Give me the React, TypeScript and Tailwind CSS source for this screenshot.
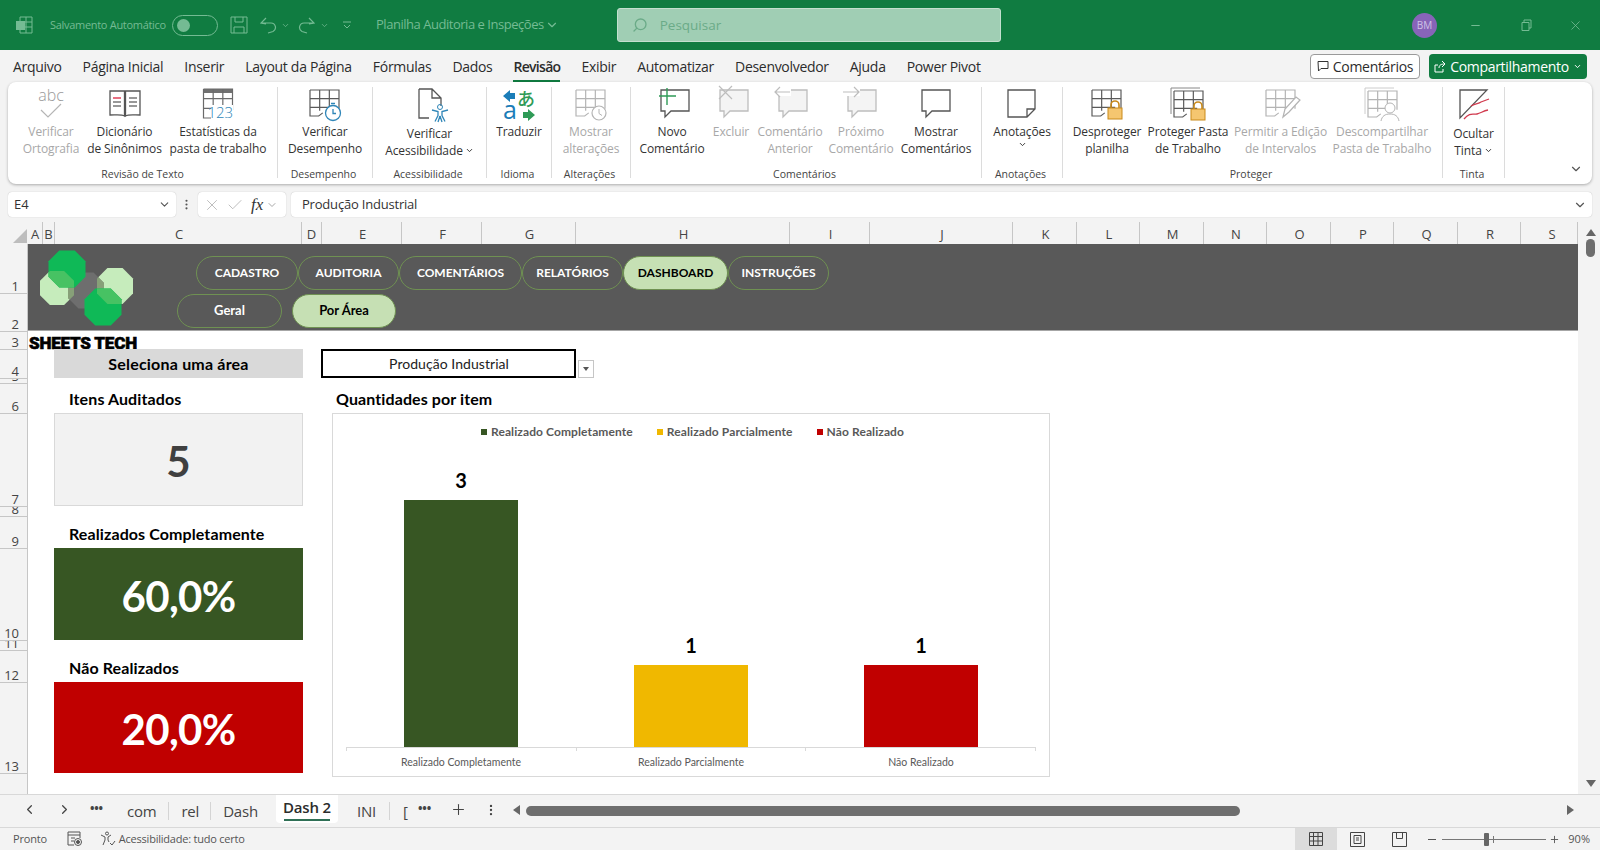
import type { ReactNode } from "react";
import { Check, ChevronDown, ChevronLeft, ChevronRight, Minus, MoreVertical, Plus, Search, X } from "lucide-react";

const ui = "font-['Open_Sans',sans-serif]";
const calibri = "font-['Lato',sans-serif]";

// table glyph used by several ribbon buttons
function TableIcon({ x = 5, y = 5, w = 29, h = 26, c = "#5a5a5a", fill = "none" }: { x?: number; y?: number; w?: number; h?: number; c?: string; fill?: string }) {
  const cw = w / 3;
  const ch = h / 3;
  return (
    <g stroke={c} strokeWidth="1.2" fill={fill}>
      <path d={`M${x} ${y}h${w}v${h * 0.72}M${x} ${y}v${h}h${w * 0.3}l${w * 0.14} -${h * 0.12}`} />
      <path d={`M${x} ${y + ch}h${w}M${x} ${y + ch * 2}h${w * 0.8}M${x + cw} ${y}v${h * 0.8}M${x + cw * 2} ${y}v${h * 0.8}`} />
    </g>
  );
}

function Bubble({ c = "#555", fill = "#fff", x = 8, y = 5 }: { c?: string; fill?: string; x?: number; y?: number }) {
  return <path d={`M${x} ${y}h28v21H${x + 10}l-6 6v-6h-4z`} fill={fill} stroke={c} strokeWidth="1.3" />;
}

function Lock({ x, y }: { x: number; y: number }) {
  return (
    <g>
      <path d={`M${x + 3} ${y + 8}v-3a4 4 0 0 1 8 0v3`} fill="none" stroke="#c98a1a" strokeWidth="1.6" />
      <rect x={x} y={y + 8} width="14" height="11" fill="#f5c670" stroke="#c98a1a" />
    </g>
  );
}

function Svg({ children }: { children: ReactNode }) {
  return <svg width="40" height="40" viewBox="0 0 40 40">{children}</svg>;
}

const icons: Record<string, ReactNode> = {
  spell: (
    <Svg>
      <text x="20" y="16" textAnchor="middle" fontSize="16" fontFamily="Open Sans" fontWeight="300" fill="#9a9a9a">abc</text>
      <path d="M10 25l7 7L30 19" fill="none" stroke="#b5b5b5" strokeWidth="1.2" />
    </Svg>
  ),
  book: (
    <Svg>
      <path d="M19.5 31c-3-2-9-1-14.500-1V6h14.500zM20.500 31c3-2 9-1 14.500-1V6H20.500z" fill="#fff" stroke="#555" strokeWidth="1.3" />
      <path d="M8 13h8" stroke="#e0405a" strokeWidth="1.500" />
      <path d="M8 17h8M8 21h8M24 13h8M24 17h8M24 21h8" stroke="#777" strokeWidth="1.300" />
    </Svg>
  ),
  stats: (
    <Svg>
      <rect x="5.500" y="4" width="29" height="4" fill="#707070" />
      <TableIcon x={5.500} y={4} w={29} h={29} c="#6a6a6a" />
      <rect x="13" y="20" width="22" height="14" fill="#fff" />
      <text x="35" y="33" textAnchor="end" fontSize="15" fontFamily="Open Sans" fontWeight="300" fill="#2f86b8">123</text>
    </Svg>
  ),
  perf: (
    <Svg>
      <TableIcon />
      <circle cx="28" cy="28" r="7.500" fill="#fff" stroke="#2f86b8" strokeWidth="1.300" />
      <path d="M28 24v4.500h3M26 18.500h4" fill="none" stroke="#2f86b8" strokeWidth="1.300" />
    </Svg>
  ),
  access: (
    <Svg>
      <path d="M9 4h13l9 9v8M22 4v9h9M19 33H9V4" fill="none" stroke="#555" strokeWidth="1.300" />
      <circle cx="30" cy="22" r="2.500" fill="none" stroke="#2f86b8" />
      <path d="M22 25l6 1.500v4l-3 6M38 25l-6 1.500v4l3 6M30 31l-2 6M30 31l2 6" fill="none" stroke="#2f86b8" strokeWidth="1.300" />
    </Svg>
  ),
  translate: (
    <Svg>
      <path d="M4 11l7-6v3h5v6h-5v3z" fill="#1b7db8" />
      <text x="27" y="21" textAnchor="middle" fontSize="18" fontWeight="500" fontFamily="Noto Sans CJK JP" fill="#2f9b57">あ</text>
      <text x="11" y="34" textAnchor="middle" fontSize="25" fontFamily="Open Sans" fill="#1b7db8">a</text>
      <path d="M36 30l-7 6v-3h-5v-6h5v-3z" fill="#2f9b57" />
    </Svg>
  ),
  changes: (
    <Svg>
      <TableIcon c="#b4b4b4" />
      <circle cx="28" cy="28" r="7" fill="#fff" stroke="#b4b4b4" strokeWidth="1.200" />
      <path d="M28 24v4.500l3 2" fill="none" stroke="#b4b4b4" />
    </Svg>
  ),
  newc: (
    <Svg>
      <Bubble x={9} />
      <path d="M15 3v17M7 11h17" stroke="#2f9b57" strokeWidth="1.400" />
    </Svg>
  ),
  del: (
    <Svg>
      <Bubble x={9} c="#bdbdbd" fill="#f4f4f4" />
      <path d="M8 1l13 13M21 1L8 14" stroke="#bdbdbd" strokeWidth="1.200" />
    </Svg>
  ),
  prev: (
    <Svg>
      <Bubble x={9} c="#bdbdbd" fill="#f4f4f4" />
      <rect x="3" y="3" width="18" height="8" fill="#fff" />
      <path d="M20 7H5m5-5L5 7l5 5" fill="none" stroke="#bdbdbd" strokeWidth="1.200" />
    </Svg>
  ),
  next: (
    <Svg>
      <Bubble x={7} c="#bdbdbd" fill="#f4f4f4" />
      <rect x="1" y="3" width="18" height="8" fill="#fff" />
      <path d="M2 7h16m-5-5l5 5-5 5" fill="none" stroke="#bdbdbd" strokeWidth="1.200" />
    </Svg>
  ),
  show: (
    <Svg>
      <Bubble x={6} />
    </Svg>
  ),
  note: (
    <Svg>
      <path d="M6 5h27v19l-8 8H6zM33 24h-8v8" fill="#fff" stroke="#555" strokeWidth="1.300" />
    </Svg>
  ),
  unprotect: (
    <Svg>
      <TableIcon />
      <Lock x={21} y={15} />
    </Svg>
  ),
  protect: (
    <Svg>
      <path d="M3 29V3h29" fill="none" stroke="#888" />
      <TableIcon x={6} y={6} h={26} />
      <Lock x={23} y={16} />
    </Svg>
  ),
  ranges: (
    <Svg>
      <TableIcon c="#b4b4b4" />
      <path d="M22 32l2-8 11-12 4 3-11 12z" fill="#fff" stroke="#b4b4b4" strokeWidth="1.200" />
    </Svg>
  ),
  unshare: (
    <Svg>
      <path d="M3 29V3h29" fill="none" stroke="#ccc" />
      <TableIcon x={6} y={6} c="#b4b4b4" />
      <circle cx="28" cy="23" r="5" fill="#fff" stroke="#b4b4b4" />
      <path d="M19 36c1-5 4-7 9-7s8 2 9 7" fill="#fff" stroke="#b4b4b4" />
    </Svg>
  ),
  ink: (
    <Svg>
      <path d="M6 5h27L6 33z" fill="none" stroke="#555" strokeWidth="1.300" />
      <path d="M10 34c6-7 9-4 13-5s6-3 11-4M17 21c5-3 7-2 10-4l8-3" fill="none" stroke="#d13a4e" strokeWidth="1.300" />
    </Svg>
  ),
};

type Btn = { w: number; icon: string; a: string; b?: string; off?: boolean; down?: boolean; low?: boolean };

function RibbonButton({ w, icon, a, b, off, down, low }: Btn) {
  return (
    <div style={{ width: w }} className={`flex flex-col items-center pt-1 text-[12px] leading-[17px] tracking-[-0.1px] whitespace-nowrap ${off ? "text-[#a8a8a8]" : "text-[#333]"}`}>
      <div className="flex h-[37px] w-10 items-center justify-center">{icons[icon]}</div>
      <div className={low ? "mt-[2px]" : ""}>{a}</div>
      <div className="flex items-center justify-center gap-[2px]">
        {b}
        {down && <ChevronDown size={9} strokeWidth={2.5} />}
      </div>
    </div>
  );
}

const groups: { label: string; w: number; pl?: number; buttons: Btn[] }[] = [
  {
    label: "Revisão de Texto",
    w: 269,
    pl: 8,
    buttons: [
      { w: 70, icon: "spell", a: "Verificar", b: "Ortografia", off: true },
      { w: 77, icon: "book", a: "Dicionário", b: "de Sinônimos" },
      { w: 110, icon: "stats", a: "Estatísticas da", b: "pasta de trabalho" },
    ],
  },
  { label: "Desempenho", w: 94, buttons: [{ w: 94, icon: "perf", a: "Verificar", b: "Desempenho" }] },
  { label: "Acessibilidade", w: 113, buttons: [{ w: 113, icon: "access", a: "Verificar", b: "Acessibilidade", down: true, low: true }] },
  { label: "Idioma", w: 64, buttons: [{ w: 64, icon: "translate", a: "Traduzir" }] },
  { label: "Alterações", w: 78, buttons: [{ w: 78, icon: "changes", a: "Mostrar", b: "alterações", off: true }] },
  {
    label: "Comentários",
    w: 350,
    pl: 10,
    buttons: [
      { w: 62, icon: "newc", a: "Novo", b: "Comentário" },
      { w: 56, icon: "del", a: "Excluir", off: true },
      { w: 62, icon: "prev", a: "Comentário", b: "Anterior", off: true },
      { w: 80, icon: "next", a: "Próximo", b: "Comentário", off: true },
      { w: 70, icon: "show", a: "Mostrar", b: "Comentários" },
    ],
  },
  { label: "Anotações", w: 80, buttons: [{ w: 80, icon: "note", a: "Anotações", down: true }] },
  {
    label: "Proteger",
    w: 379,
    buttons: [
      { w: 88, icon: "unprotect", a: "Desproteger", b: "planilha" },
      { w: 74, icon: "protect", a: "Proteger Pasta", b: "de Trabalho" },
      { w: 111, icon: "ranges", a: "Permitir a Edição", b: "de Intervalos", off: true },
      { w: 92, icon: "unshare", a: "Descompartilhar", b: "Pasta de Trabalho", off: true },
    ],
  },
  { label: "Tinta", w: 61, buttons: [{ w: 61, icon: "ink", a: "Ocultar", b: "Tinta", down: true, low: true }] },
];

const menus = ["Arquivo", "Página Inicial", "Inserir", "Layout da Página", "Fórmulas", "Dados", "Revisão", "Exibir", "Automatizar", "Desenvolvedor", "Ajuda", "Power Pivot"];

const columns: [string, number][] = [
  ["A", 15], ["B", 12], ["C", 247], ["D", 20], ["E", 80], ["F", 80], ["G", 94], ["H", 214], ["I", 80], ["J", 143],
  ["K", 64], ["L", 63], ["M", 64], ["N", 63], ["O", 64], ["P", 63], ["Q", 64], ["R", 63], ["S", 57],
];

const rowHeads: [string, number][] = [
  ["1", 50], ["2", 38], ["3", 18], ["4", 29], ["5", 5], ["6", 30], ["7", 93], ["8", 10], ["9", 32], ["10", 92], ["11", 10], ["12", 32], ["13", 91], ["", 20],
];

const nav = [
  { t: "CADASTRO", w: 102 },
  { t: "AUDITORIA", w: 101 },
  { t: "COMENTÁRIOS", w: 123 },
  { t: "RELATÓRIOS", w: 101 },
  { t: "DASHBOARD", w: 105, on: true },
  { t: "INSTRUÇÕES", w: 101 },
];

function Pill({ t, w, on, small }: { t: string; w: number; on?: boolean; small?: boolean }) {
  return (
    <div style={{ width: w }} className={`flex h-[34px] items-center justify-center rounded-[17px] border border-[#6f9152] font-bold ${small ? "text-[12px]" : "text-[13px]"} ${on ? "bg-[#c6e0b4] text-black" : "text-white"}`}>
      {t}
    </div>
  );
}

function Octagon({ cx, cy, r, fill }: { cx: number; cy: number; r: number; fill: string }) {
  return <polygon points={octa(cx, cy, r)} fill={fill} />;
}

function octa(cx: number, cy: number, r: number) {
  const k = r * 0.42;
  return [[-k, -r], [k, -r], [r, -k], [r, k], [k, r], [-k, r], [-r, k], [-r, -k]].map(([a, b]) => `${cx + a},${cy + b}`).join(" ");
}

function Logo() {
  return (
    <svg width="110" height="87" viewBox="0 0 110 87" className="absolute left-0 top-0">
      <defs>
        <clipPath id="ll"><polygon points={octa(29, 44, 17)} /></clipPath>
        <clipPath id="lr"><polygon points={octa(87, 42, 18)} /></clipPath>
      </defs>
      <Octagon cx={29} cy={44} r={17} fill="#c6ecbc" />
      <Octagon cx={87} cy={42} r={18} fill="#c6ecbc" />
      <Octagon cx={58} cy={46.500} r={18} fill="#6e6e6e" />
      <g clipPath="url(#ll)"><Octagon cx={58} cy={46.500} r={18} fill="#87a078" /></g>
      <g clipPath="url(#lr)"><Octagon cx={58} cy={46.500} r={18} fill="#87a078" /></g>
      <Octagon cx={39} cy={25} r={18.500} fill="#0fb957" />
      <Octagon cx={75} cy={63} r={18.500} fill="#0fb957" />
      <g clipPath="url(#ll)"><Octagon cx={39} cy={25} r={18.500} fill="#47c263" /></g>
      <g clipPath="url(#lr)"><Octagon cx={75} cy={63} r={18.500} fill="#47c263" /></g>
    </svg>
  );
}

function Kpi({ label, value, cls, h, labelH }: { label: string; value: string; cls: string; h: number; labelH: number }) {
  return (
    <>
      <div style={{ height: labelH }} className="flex items-end pb-1 pl-[15px] text-[16px] font-bold leading-5 tracking-[0.1px] text-black">{label}</div>
      <div style={{ height: h }} className={`flex items-center justify-center pt-1 ${cls}`}>{value}</div>
    </>
  );
}

const bars = [
  { v: "3", h: 247, c: "bg-[#375623]", t: "Realizado Completamente" },
  { v: "1", h: 82, c: "bg-[#f0b800]", t: "Realizado Parcialmente" },
  { v: "1", h: 82, c: "bg-[#c00000]", t: "Não Realizado" },
];

const legend = [
  { c: "bg-[#375623]", t: "Realizado Completamente", ml: "ml-0" },
  { c: "bg-[#f0b800]", t: "Realizado Parcialmente", ml: "ml-[24px]" },
  { c: "bg-[#c00000]", t: "Não Realizado", ml: "ml-[24px]" },
];

function Chart() {
  return (
    <div className="ml-[11px] flex h-[364px] w-[718px] flex-col border border-[#d9d9d9] px-[13px]">
      <div className="flex h-[38px] items-center pb-[2px] pl-[135px] text-[12px] font-bold tracking-[0.1px] text-[#595959]">
        {legend.map((l) => (
          <div key={l.t} className={`flex items-center gap-[4px] ${l.ml}`}>
            <span className={`h-[6px] w-[6px] ${l.c}`} />
            {l.t}
          </div>
        ))}
      </div>
      <div className="flex h-[295px] items-end">
        {bars.map((b) => (
          <div key={b.t} className="flex flex-1 flex-col items-center">
            <div className="mb-[8px] text-[20px] font-bold leading-6 text-black">{b.v}</div>
            <div style={{ height: b.h }} className={`w-[114px] ${b.c}`} />
          </div>
        ))}
      </div>
      <div className="flex h-[4px] border-x border-t border-[#d9d9d9]">
        <div className="flex-1 border-r border-[#d9d9d9]" />
        <div className="flex-1 border-r border-[#d9d9d9]" />
        <div className="flex-1" />
      </div>
      <div className="flex pt-[3px] text-[10.500px] leading-[16px] text-[#595959]">
        {bars.map((b) => (
          <div key={b.t} className="flex-1 text-center">{b.t}</div>
        ))}
      </div>
    </div>
  );
}

function TitleBar() {
  const c = "#74bb93";
  return (
    <div className={`flex h-[50px] items-center bg-[#107c41] text-[#74bb93] ${ui}`}>
      <svg width="18" height="18" viewBox="0 0 18 18" className="ml-[15px]">
        <path d="M5 1h12v16H5z M5 6h12M5 11h12M11 1v16" fill="none" stroke={c} />
        <rect x="1" y="5" width="9" height="9" fill={c} />
      </svg>
      <span className="ml-[17px] w-[120px] text-[11px] tracking-[-0.3px] whitespace-nowrap">Salvamento Automático</span>
      <div className="ml-[2px] flex h-[21px] w-[46px] items-center rounded-full border border-[#74bb93] pl-[4px]">
        <span className="h-[13px] w-[13px] rounded-full bg-[#74bb93]" />
      </div>
      <svg width="18" height="18" viewBox="0 0 18 18" className="ml-[12px]" fill="none" stroke={c}>
        <path d="M1 1h16v16H1zM5 1v5h8V1M4 17v-6h10v6" />
      </svg>
      <svg width="18" height="18" viewBox="0 0 18 18" className="ml-[12px]" fill="none" stroke={c} strokeWidth="1.200">
        <path d="M2 7h9a4.500 4.500 0 0 1 2 8.500L8 17M6 2L1 7l5 1" />
      </svg>
      <ChevronDown size={9} className="ml-[3px]" />
      <svg width="18" height="18" viewBox="0 0 18 18" className="ml-[7px]" fill="none" stroke={c} strokeWidth="1.200">
        <path d="M16 7H7a4.500 4.500 0 0 0-2 8.500l5 1.500M12 2l5 5-5 1" />
      </svg>
      <ChevronDown size={9} className="ml-[5px]" />
      <svg width="10" height="10" viewBox="0 0 10 10" className="ml-[13px]" fill="none" stroke={c}>
        <path d="M1 2h8M2 5l3 3 3-3" />
      </svg>
      <span className="ml-[24px] text-[13px] tracking-[-0.47px] whitespace-nowrap">Planilha Auditoria e Inspeções</span>
      <ChevronDown size={14} className="ml-[1px]" />
      <div className="ml-[58px] flex h-[34px] w-[384px] items-center rounded-[3px] border border-[#c3e0cf] bg-[#a0ceb4] pl-[14px] text-[13.500px] text-[#6bab88]">
        <Search size={16} className="-scale-x-100" />
        <span className="ml-[12px]">Pesquisar</span>
      </div>
      <div className="ml-auto flex h-[25px] w-[25px] items-center justify-center rounded-full bg-[#8764b8] text-[10px] text-[#cfc2e6]">BM</div>
      <Minus size={13} className="ml-[32px]" />
      <svg width="12" height="12" viewBox="0 0 12 12" className="ml-[38px]" fill="none" stroke={c}>
        <path d="M2 3.500h7v8H2zM4 3.500V1h7v8H9" />
      </svg>
      <X size={15} strokeWidth={1.300} className="ml-[36px] mr-[17px]" />
    </div>
  );
}

function Tabs() {
  return (
    <div className={`flex h-[32px] items-center bg-[#f3f3f3] pl-[13px] text-[14px] tracking-[-0.3px] text-[#2c2c2c] ${ui}`}>
      <div className="flex gap-[21px]">
        {menus.map((m) => (
          <div key={m} className={`relative whitespace-nowrap ${m === "Revisão" ? "font-semibold tracking-[-0.7px]" : ""}`}>
            {m}
            {m === "Revisão" && <div className="absolute inset-x-0 -bottom-[5px] h-[2px] bg-[#107c41]" />}
          </div>
        ))}
      </div>
      <div className="ml-auto flex h-[25px] w-[110px] items-center justify-center gap-[4px] rounded-[4px] border border-[#9a9a9a] bg-white">
        <svg width="12" height="12" viewBox="0 0 12 12" fill="none" stroke="#333"><path d="M1 1.500h10v7H4L1.500 11z" /></svg>
        Comentários
      </div>
      <div className="ml-[9px] mr-[13px] flex h-[25px] w-[158px] items-center justify-center gap-[4px] rounded-[4px] bg-[#107c41] text-white">
        <svg width="12" height="13" viewBox="0 0 12 13" fill="none" stroke="#fff"><path d="M1 5h3M9 9v3H1V5M5 8c0-3 2-4 6-4M8 1l3 3-3 3" /></svg>
        Compartilhamento
        <ChevronDown size={9} strokeWidth={2.500} />
      </div>
    </div>
  );
}

function Ribbon() {
  return (
    <div className={`relative mx-2 flex h-[102px] rounded-[8px] bg-white shadow-[0_1px_3px_rgba(0,0,0,0.3)] ${ui}`}>
      {groups.map((g) => (
        <div key={g.label} style={{ width: g.w + 1 }} className="flex">
          <div className="flex flex-col" style={{ width: g.w }}>
            <div className="flex h-[84px]" style={{ paddingLeft: g.pl ?? 0 }}>
              {g.buttons.map((b) => (
                <RibbonButton key={b.a + b.b} {...b} />
              ))}
            </div>
            <div style={{ paddingRight: g.pl === 8 ? 0 : 3 }} className="text-center text-[10.500px] leading-4 text-[#444]">{g.label}</div>
          </div>
          <div className="mt-[5px] h-[91px] w-px bg-[#dcdcdc]" />
        </div>
      ))}
      <ChevronDown size={14} className="absolute bottom-[8px] right-[9px] text-[#555]" />
    </div>
  );
}

function FormulaBar() {
  return (
    <div className={`flex h-[25px] bg-[#f3f3f3] pl-2 pr-2 text-[13px] text-[#333] ${ui}`}>
      <div className="flex w-[168px] items-center justify-between rounded-[4px] bg-white pl-[6px] pr-[5px] shadow-[0_0_1px_rgba(0,0,0,0.3)]">
        E4
        <ChevronDown size={13} className="text-[#555]" />
      </div>
      <MoreVertical size={13} className="mx-[4px] mt-[6px] text-[#555]" />
      <div className="ml-[1px] flex w-[88px] items-center rounded-[4px] bg-white pl-[5px] text-[#a8a8a8] shadow-[0_0_1px_rgba(0,0,0,0.3)]">
        <X size={18} strokeWidth={1} />
        <Check size={18} strokeWidth={1} className="ml-[5px]" />
        <span className="ml-[7px] font-['Liberation_Serif',serif] text-[17px] italic text-[#333]">fx</span>
        <ChevronDown size={12} className="ml-[3px]" />
      </div>
      <div className="ml-[5px] flex flex-1 items-center justify-between rounded-[4px] bg-white pl-[11px] pr-[5px] tracking-[-0.2px] shadow-[0_0_1px_rgba(0,0,0,0.3)]">
        Produção Industrial
        <ChevronDown size={14} className="text-[#555]" />
      </div>
    </div>
  );
}

function Sheet() {
  return (
    <div className="flex h-[550px] bg-white">
      <div className="flex w-[28px] flex-col border-r border-[#c6c6c6] bg-[#f3f3f3] pr-[4px] text-right">
        {rowHeads.map(([t, h]) => (
          <div key={t + h} style={{ height: h }} className={`flex items-end justify-end overflow-hidden text-[13px] leading-[14px] text-[#444] ${t ? "border-b border-[#c6c6c6]" : ""} -mr-[4px] pr-[8px] ${ui}`}>
            {t}
          </div>
        ))}
      </div>
      <div className="relative flex-1">
        <div className={`relative h-[87px] border-b border-[#a6a6a6] bg-[#595959] pl-[149px] pt-[12px] ${calibri}`}>
          <Logo />
          <div className="flex w-fit pl-[19px]">
            {nav.map((n) => (
              <Pill key={n.t} {...n} small />
            ))}
          </div>
          <div className="mt-[4px] flex gap-[10px]">
            <Pill t="Geral" w={105} />
            <Pill t="Por Área" w={104} on />
          </div>
        </div>
        <div className="h-[18px] pl-[1px] font-['Roboto',sans-serif] text-[17px] font-black leading-[24px] tracking-[-0.2px] text-black [-webkit-text-stroke:0.6px_black]">SHEETS TECH</div>
        <div className={`relative flex pl-[26px] ${calibri}`}>
          <div className="w-[249px]">
            <div className="flex h-[29px] items-center justify-center bg-[#d9d9d9] text-[16px] font-bold tracking-[0.2px] text-black">Seleciona uma área</div>
            <Kpi label="Itens Auditados" value="5" h={93} labelH={35} cls="border border-[#d9d9d9] bg-[#f2f2f2] text-[42px] font-bold text-[#404040]" />
            <Kpi label="Realizados Completamente" value="60,0%" h={92} labelH={42} cls="bg-[#375623] text-[42px] font-bold tracking-[-0.7px] text-white" />
            <Kpi label="Não Realizados" value="20,0%" h={91} labelH={42} cls="bg-[#c00000] text-[42px] font-bold tracking-[-0.7px] text-white" />
          </div>
          <div className="ml-[18px]">
            <div className="flex">
              <div className="flex h-[29px] w-[255px] items-center justify-center border-2 border-black pl-[1px] text-[14px] tracking-[0.05px] text-[#222]">Produção Industrial</div>
              <div className="ml-[2px] mt-[11px] flex h-[18px] w-[16px] items-center justify-center border border-[#c6c6c6]">
                <span className="border-x-[3px] border-t-[4px] border-x-transparent border-t-[#555]" />
              </div>
            </div>
            <div className="flex h-[35px] items-end pb-1 pl-[15px] text-[16px] font-bold leading-5 tracking-[0.1px] text-black">Quantidades por item</div>
            <Chart />
          </div>
        </div>
      </div>
    </div>
  );
}

function ColumnHeader() {
  return (
    <div className={`flex h-[22px] bg-[#f3f3f3] text-[13px] text-[#444] ${ui}`}>
      <div className="flex w-[28px] items-end justify-end pb-[1px] pr-[1px]">
        <span className="border-b-[14px] border-l-[14px] border-b-[#bdbdbd] border-l-transparent" />
      </div>
      {columns.map(([c, w]) => (
        <div key={c} style={{ width: w, paddingLeft: c === "S" ? 6 : w > 20 ? 2 : 0 }} className="flex items-center justify-center border-r border-[#c6c6c6] pt-[2px] leading-none">{c}</div>
      ))}
    </div>
  );
}

function SheetTabs() {
  return (
    <div className={`flex h-[33px] border-t border-[#d8d8d8] bg-[#f3f3f3] text-[15px] tracking-[-0.2px] text-[#444] ${ui}`}>
      <ChevronLeft size={15} strokeWidth={2} className="ml-[22px] mt-[7px]" />
      <ChevronRight size={15} strokeWidth={2} className="ml-[20px] mt-[7px]" />
      <span className="ml-[18px] mt-[8px] text-[12px] leading-3 font-bold">•••</span>
      <span className="ml-[24px] mt-[5px]">com</span>
      <span className="ml-[12px] mt-[7px] h-[18px] w-px bg-[#d4d4d4]" />
      <span className="ml-[12px] mt-[5px]">rel</span>
      <span className="ml-[11px] mt-[7px] h-[18px] w-px bg-[#d4d4d4]" />
      <span className="ml-[12px] mt-[5px]">Dash</span>
      <div className="ml-[18px] flex h-[28px] w-[62px] flex-col items-center rounded-b-[4px] bg-white pt-[1px] font-semibold text-[#2c2c2c]">
        <span className="leading-[22px]">Dash 2</span>
        <span className="mt-[1px] h-[2px] w-[46px] bg-[#2f6f55]" />
      </div>
      <span className="ml-[19px] mt-[5px]">INI</span>
      <span className="ml-[13px] mt-[7px] h-[18px] w-px bg-[#d4d4d4]" />
      <span className="ml-[13px] mt-[5px] w-[8px]">[</span>
      <span className="ml-[7px] mt-[8px] text-[12px] leading-3 font-bold">•••</span>
      <Plus size={17} strokeWidth={1.500} className="ml-[19px] mt-[6px]" />
      <MoreVertical size={14} className="ml-[17px] mt-[8px]" />
      <span className="ml-[15px] mt-[10px] h-0 border-y-[5px] border-r-[7px] border-y-transparent border-r-[#666]" />
      <div className="ml-[6px] mt-[11px] h-[10px] w-[714px] rounded-full bg-[#6e6e6e]" />
      <span className="ml-[327px] mt-[10px] h-0 border-y-[5px] border-l-[7px] border-y-transparent border-l-[#666]" />
    </div>
  );
}

function StatusBar() {
  return (
    <div className={`flex h-[23px] items-center border-t border-[#d8d8d8] bg-[#f3f3f3] text-[11px] text-[#555] ${ui}`}>
      <span className="ml-[13px] tracking-[-0.2px]">Pronto</span>
      <svg width="16" height="16" viewBox="0 0 16 16" className="ml-[20px]" fill="none" stroke="#555">
        <path d="M1 1h12v6M1 1v13h6M1 4h12M4 7h4M4 10h3" />
        <circle cx="11" cy="11" r="3.500" />
        <circle cx="11" cy="11" r="1.500" fill="#555" />
      </svg>
      <svg width="16" height="16" viewBox="0 0 16 16" className="ml-[17px]" fill="none" stroke="#555">
        <circle cx="7" cy="2.500" r="1.500" />
        <path d="M1 4l4 2v3l-2 5M11 4L8 6v3l1 2M10 12l2 2 3-4" />
      </svg>
      <span className="ml-[3px] tracking-[-0.22px]">Acessibilidade: tudo certo</span>
      <div className="ml-auto flex h-full w-[42px] items-center justify-center bg-[#dcdcdc]">
        <svg width="14" height="14" viewBox="0 0 14 14" fill="none" stroke="#444"><path d="M.5.500h13v13H.500zM4.500.500v13M9 .500v13M.500 4.500h13M.500 9h13" /></svg>
      </div>
      <svg width="15" height="15" viewBox="0 0 15 15" className="ml-[13px]" fill="none" stroke="#444"><path d="M.5.500h14v14H.500zM4 3.500h7v8H4zM6 6h3M6 8h3" /></svg>
      <svg width="15" height="15" viewBox="0 0 15 15" className="ml-[27px]" fill="none" stroke="#444"><path d="M.5.500h14v14H.500zM4.500.500v6h6v-6" /></svg>
      <span className="ml-[21px] h-px w-[8px] bg-[#555]" />
      <div className="relative ml-[6px] h-px w-[104px] bg-[#777]">
        <span className="absolute -top-[6px] left-[42px] h-[13px] w-[5px] rounded-[1px] bg-[#666]" />
        <span className="absolute -top-[3px] left-[51px] h-[7px] w-px bg-[#777]" />
      </div>
      <Plus size={11} className="ml-[3px]" />
      <span className="ml-[8px] mr-[10px]">90%</span>
    </div>
  );
}

function VerticalScroll() {
  return (
    <div className="flex w-[22px] flex-col items-center bg-[#f3f3f3] pl-[3px]">
      <span className="mt-[7px] border-x-[5px] border-b-[7px] border-x-transparent border-b-[#666]" />
      <div className="mt-[3px] h-[18px] w-[9px] rounded-full bg-[#6e6e6e]" />
      <span className="mt-auto mb-[7px] border-x-[5px] border-t-[7px] border-x-transparent border-t-[#666]" />
    </div>
  );
}

export default function App() {
  return (
    <div className="h-[850px] w-[1600px] overflow-hidden bg-[#f3f3f3]">
      <TitleBar />
      <Tabs />
      <Ribbon />
      <div className="h-2" />
      <FormulaBar />
      <div className="mt-[5px] flex">
        <div className="w-[1578px]">
          <ColumnHeader />
          <Sheet />
        </div>
        <VerticalScroll />
      </div>
      <SheetTabs />
      <StatusBar />
    </div>
  );
}
